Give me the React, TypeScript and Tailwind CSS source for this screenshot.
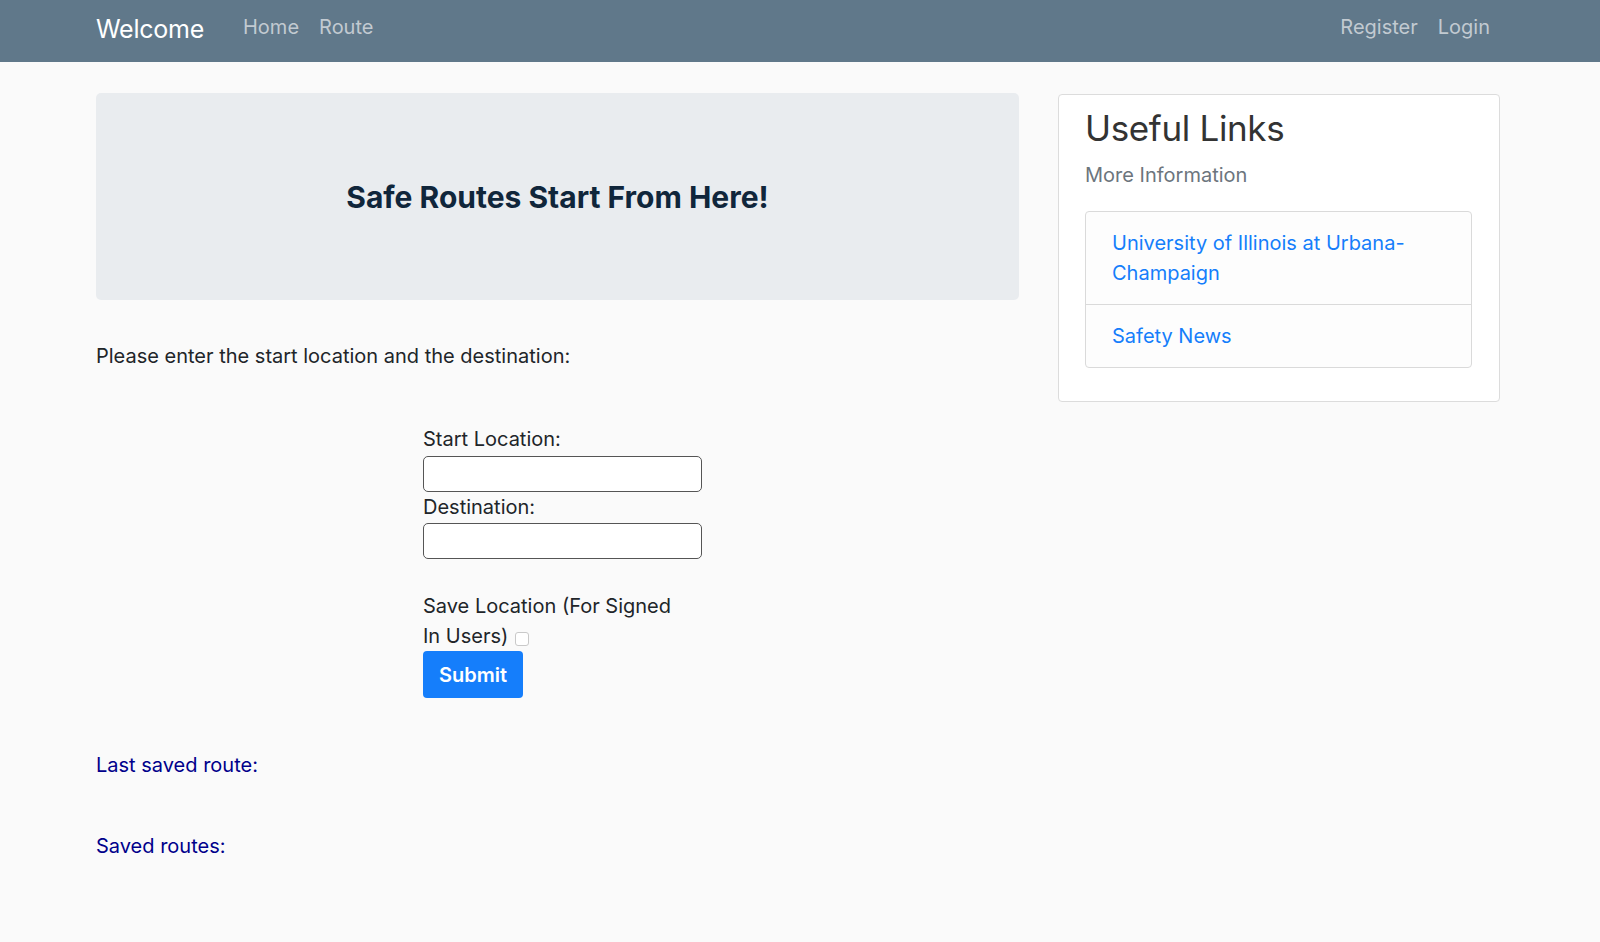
import { useState } from 'react';

export default function App() {
  const [start, setStart] = useState('');
  const [dest, setDest] = useState('');
  const [save, setSave] = useState(false);

  return (
    <div className="min-h-screen bg-[#fafafa] text-[#212529] font-['Inter','Liberation_Sans',sans-serif]">
      {/* Navbar */}
      <nav className="h-[62px] bg-[#60788a]">
        <div className="flex items-start pl-[96px] pr-[110px]">
          <a href="#" className="mt-[14px] text-[25px] leading-[30px] text-white tracking-[-0.01em]">
            Welcome
          </a>
          <a href="#" className="ml-[39px] mt-[12px] text-[20px] leading-[30px] text-[#c2cad1]">
            Home
          </a>
          <a href="#" className="ml-[20px] mt-[12px] text-[20px] leading-[30px] text-[#c2cad1]">
            Route
          </a>
          <div className="flex-1" />
          <a href="#" className="mt-[12px] text-[20px] leading-[30px] text-[#c2cad1]">
            Register
          </a>
          <a href="#" className="ml-[20px] mt-[12px] text-[20px] leading-[30px] text-[#c2cad1]">
            Login
          </a>
        </div>
      </nav>

      <div className="flex items-start pl-[96px] pr-[100px] pt-[31px]">
        {/* Left column */}
        <div className="w-[923px]">
          <div className="flex h-[207px] items-center justify-center rounded-[5px] bg-[#e9ecef]">
            <h3 className="text-[30px] font-bold leading-[36px] text-[#10263b]">
              Safe Routes Start From Here!
            </h3>
          </div>

          <p className="mt-[41px] text-[20px] leading-[30px]">
            Please enter the start location and the destination:
          </p>

          <form
            className="ml-[327px] mt-[53px] w-[279px]"
            onSubmit={(e) => e.preventDefault()}
          >
            <label className="block text-[20px] leading-[30px]">Start Location:</label>
            <input
              value={start}
              onChange={(e) => setStart(e.target.value)}
              className="mt-[2px] block h-[36px] w-[279px] rounded-[5px] border border-[#555555] bg-white px-2 text-[18px]"
            />
            <label className="block text-[20px] leading-[30px]">Destination:</label>
            <input
              value={dest}
              onChange={(e) => setDest(e.target.value)}
              className="mt-[1px] block h-[36px] w-[279px] rounded-[5px] border border-[#555555] bg-white px-2 text-[18px]"
            />

            <div className="mt-[32px] text-[20px] leading-[30px]">
              Save Location (For Signed
              <br />
              In Users){' '}
              <span
                onClick={() => setSave(!save)}
                className="ml-[1px] inline-block h-[14px] w-[14px] cursor-pointer rounded-[3px] border border-[#c9c9c9] bg-white align-[-3px]"
              />
            </div>

            <button
              type="submit"
              className="block h-[47px] w-[100px] rounded-[4px] bg-[#157efb] text-[20px] font-semibold text-white"
            >
              Submit
            </button>
          </form>

          <p className="mt-[52px] text-[20px] leading-[30px] text-[#00008b]">Last saved route:</p>
          <p className="mt-[51px] text-[20px] leading-[30px] text-[#00008b]">Saved routes:</p>
        </div>

        {/* Right column */}
        <div className="ml-[39px] mt-[1px] h-[308px] w-[442px] rounded-[4px] border border-[#dcdcdc] bg-white pl-[26px] pr-[27px] pt-[12px]">
          <h3 className="text-[35px] leading-[43px] text-[#333333] tracking-[-0.01em]">Useful Links</h3>
          <h6 className="mt-[10px] text-[20px] leading-[30px] text-[#6c757d]">More Information</h6>

          <ul className="mt-[21px] rounded-[4px] border border-[#dadada] bg-[#fdfdfd]">
            <li className="px-[26px] py-[16px] text-[20px] leading-[30px]">
              <a href="#" className="text-[#157efb]">
                University of Illinois at Urbana-Champaign
              </a>
            </li>
            <li className="border-t border-[#dadada] px-[26px] py-[16px] text-[20px] leading-[30px]">
              <a href="#" className="text-[#157efb]">
                Safety News
              </a>
            </li>
          </ul>
        </div>
      </div>
    </div>
  );
}
